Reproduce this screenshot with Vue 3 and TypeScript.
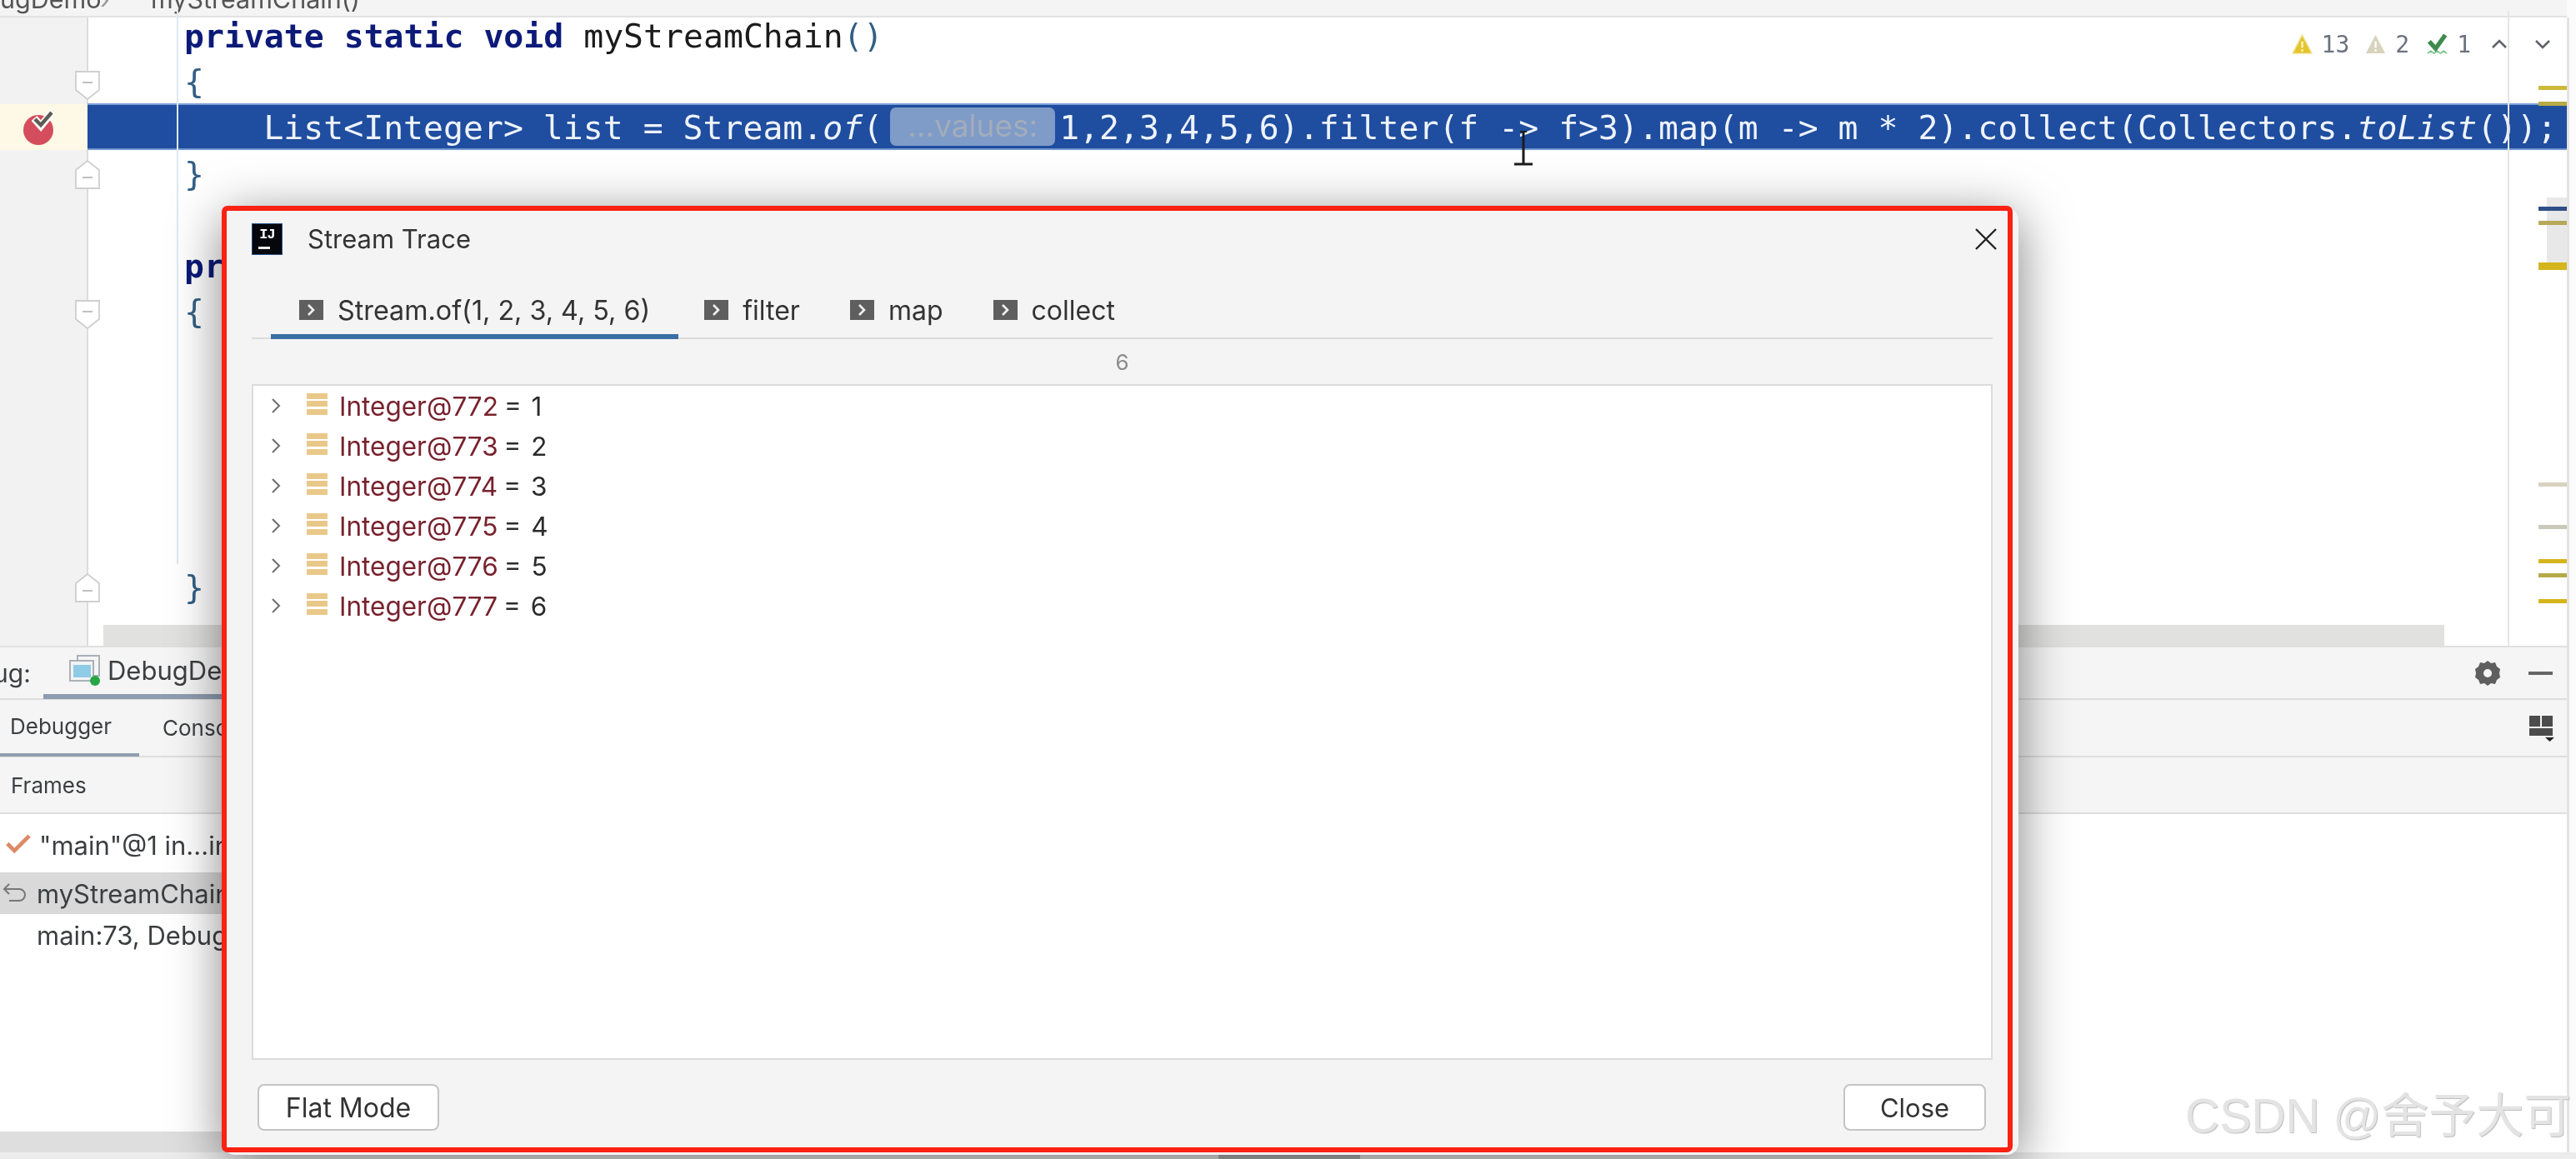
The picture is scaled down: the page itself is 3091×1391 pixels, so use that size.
<script setup lang="ts">
const ints = [
  { name: 'Integer@772', val: '1' },
  { name: 'Integer@773', val: '2' },
  { name: 'Integer@774', val: '3' },
  { name: 'Integer@775', val: '4' },
  { name: 'Integer@776', val: '5' },
  { name: 'Integer@777', val: '6' },
]
const tabs = ['Stream.of(1, 2, 3, 4, 5, 6)', 'filter', 'map', 'collect']
const stripes = [
  { y: 103, h: 5, c: '#cdb93a' },
  { y: 122, h: 5, c: '#b9aa45' },
  { y: 248, h: 5, c: '#2f4f86' },
  { y: 265, h: 5, c: '#b7a95a' },
  { y: 315, h: 9, c: '#d4b51e' },
  { y: 579, h: 5, c: '#d8d3bf' },
  { y: 630, h: 5, c: '#c9c9b9' },
  { y: 671, h: 5, c: '#d4b51e' },
  { y: 688, h: 5, c: '#b5aa4a' },
  { y: 719, h: 5, c: '#d4b51e' },
]
const folds = [
  { y: 85, up: false },
  { y: 192, up: true },
  { y: 360, up: false },
  { y: 688, up: true },
]
</script>

<template>
  <div class="page">
    <div class="crumbs">
      <span class="crumb-a">ugDemo</span>
      <span class="crumb-sep">›</span>
      <span class="crumb-b">myStreamChain()</span>
    </div>

    <div class="editor">
      <div class="gutter">
        <div class="gutter-line"></div>
        <div class="bp-band"></div>
        <svg class="bp" viewBox="0 0 44 48" width="44" height="48">
          <circle cx="20" cy="27" r="18" fill="#d44d5c" />
          <path d="M15 13l8 9L37 5" fill="none" stroke="#fff" stroke-width="9" />
          <path d="M16 14l7 7L36 6" fill="none" stroke="#5d5d55" stroke-width="4.5" />
        </svg>
        <svg
          v-for="f in folds"
          :key="f.y"
          class="fold"
          :style="{ top: f.y - 21 + 'px', transform: f.up ? 'scaleY(-1)' : 'none' }"
          viewBox="0 0 30 35"
          width="30"
          height="35"
        >
          <path d="M1 1h28v22L15 34 1 23z" fill="#fff" stroke="#cfcfcf" stroke-width="1.8" />
          <path d="M9 14h12" stroke="#c0c0c0" stroke-width="2" />
        </svg>
      </div>

      <div class="code">
        <div class="indent-line"></div>
        <div class="margin-line"></div>
        <div class="line"><b>private static void </b>myStreamChain<span class="pn">()</span></div>
        <div class="line"><span class="pn">{</span></div>
        <div class="line hl">
          <span>List&lt;Integer&gt; list = Stream.<i>of</i>(</span><span class="hint">...values:</span><span>1,2,3,4,5,6).filter(f -&gt; f&gt;3).map(m -&gt; m * 2).collect(Collectors.<i>toList</i>());</span>
        </div>
        <div class="line"><span class="pn">}</span></div>
        <div class="line"></div>
        <div class="line"><b>pr</b></div>
        <div class="line"><span class="pn">{</span></div>
        <div class="line"></div>
        <div class="line"></div>
        <div class="line"></div>
        <div class="line"></div>
        <div class="line"></div>
        <div class="line"><span class="pn">}</span></div>

        <div class="inspect">
          <svg viewBox="0 0 28 28" width="27" height="27"><path d="M14 2l12 23H2z" fill="#e3c52c" stroke="#f0e39a" stroke-width="1.5" /><path d="M14 10v8M14 20v2.5" stroke="#fff7c0" stroke-width="2.5" /></svg>
          <span class="count c1">13</span>
          <svg viewBox="0 0 28 28" width="27" height="27"><path d="M14 2l12 23H2z" fill="#d7d3bd" /><path d="M14 10v8M14 20v2.5" stroke="#fff" stroke-width="2.5" /></svg>
          <span class="count c2">2</span>
          <svg viewBox="0 0 28 30" width="27" height="29"><path d="M4 11l8 9L24 3" fill="none" stroke="#3f8a4d" stroke-width="5.5" /><path d="M2 26l4-3 4 3 4-3 4 3 4-3 4 3" fill="none" stroke="#6fbf7d" stroke-width="1.6" /></svg>
          <span class="count c3">1</span>
          <svg class="up" viewBox="0 0 20 12" width="20" height="12"><path d="M2 10l8-8 8 8" fill="none" stroke="#5f6368" stroke-width="2.6" /></svg>
          <svg class="down" viewBox="0 0 20 12" width="20" height="12"><path d="M2 2l8 8 8-8" fill="none" stroke="#5f6368" stroke-width="2.6" /></svg>
        </div>

        <div class="thumb"></div>
        <div
          v-for="s in stripes"
          :key="s.y"
          class="stripe"
          :style="{ top: s.y - 21 + 'px', height: s.h + 'px', background: s.c }"
        ></div>
        <div class="hscroll"></div>
        <svg class="ibeam" viewBox="0 0 26 42" width="26" height="42">
          <path d="M13 2v38M2 40h22" fill="none" stroke="#1c1c1c" stroke-width="3" />
          <path d="M9 1h8" stroke="#1c1c1c" stroke-width="2" />
        </svg>
      </div>
    </div>

    <div class="debug">
      <div class="bar bar-tool">
        <span class="bar-label">ug:</span>
        <div class="run-tab">
          <svg viewBox="0 0 38 38" width="38" height="38">
            <rect x="10" y="1" width="26" height="24" fill="none" stroke="#a9b1b8" stroke-width="2" />
            <rect x="1" y="7" width="28" height="24" fill="#f4f4f4" stroke="#a9b1b8" stroke-width="2" />
            <rect x="5" y="12" width="21" height="15" fill="#8ecbe6" />
            <circle cx="31" cy="31" r="6" fill="#27a644" />
          </svg>
          <span>DebugDemo</span>
        </div>
        <div class="bar-icons">
          <svg viewBox="0 0 32 32" width="32" height="32">
            <path fill="#5f5f5f" fill-rule="evenodd" d="M16 1l4 3 5-1 2 5 4 3-1 5 1 5-4 3-2 5-5-1-4 3-4-3-5 1-2-5-4-3 1-5-1-5 4-3 2-5 5 1zm0 10a5 5 0 100 10 5 5 0 000-10z" />
          </svg>
          <span class="minimize"></span>
        </div>
      </div>
      <div class="bar bar-sub">
        <div class="sub-tab active">Debugger</div>
        <div class="sub-tab">Console</div>
        <svg class="layout" viewBox="0 0 32 32" width="32" height="32">
          <rect x="1" y="1" width="13" height="13" fill="#4c4c4c" />
          <rect x="16" y="1" width="13" height="13" fill="#4c4c4c" />
          <rect x="1" y="16" width="28" height="9" fill="#4c4c4c" />
          <path d="M20 27h11l-5.500 5z" fill="#222" />
        </svg>
      </div>
      <div class="bar bar-frames"><span>Frames</span></div>
      <div class="frames">
        <div class="frame">
          <svg class="ficon" viewBox="0 0 34 26" width="32" height="25"><path d="M3 13l9 9L31 3" fill="none" stroke="#dd8a66" stroke-width="5" /></svg>
          <span>"main"@1 in...in</span>
        </div>
        <div class="frame selected">
          <svg class="ficon back" viewBox="0 0 30 26" width="30" height="26"><path d="M8 2L2 8l6 6M2 8h18a6 6 0 010 14H8" fill="none" stroke="#777" stroke-width="2" /></svg>
          <span>myStreamChain</span>
        </div>
        <div class="frame plain"><span>main:73, DebugDemo</span></div>
      </div>
      <div class="frames-scroll"></div>
    </div>
    <div class="bottom"><div class="bottom-thumb"></div></div>

    <div class="dialog">
      <div class="d-title">
        <div class="ij"><span>IJ</span><i></i></div>
        <span class="d-name">Stream Trace</span>
        <svg class="d-x" viewBox="0 0 28 26" width="28" height="26"><path d="M2 1l24 24M26 1L2 25" fill="none" stroke="#222" stroke-width="2.4" /></svg>
      </div>
      <div class="d-tabs">
        <div v-for="(t, i) in tabs" :key="t" class="d-tab" :class="{ on: i === 0 }">
          <svg viewBox="0 0 29 24" width="29" height="24">
            <rect width="29" height="24" fill="#5f5f5f" />
            <path d="M11 6l6 6-6 6" fill="none" stroke="#f0f0f0" stroke-width="2.6" />
          </svg>
          <span>{{ t }}</span>
        </div>
      </div>
      <div class="d-count">6</div>
      <div class="d-list">
        <div v-for="r in ints" :key="r.name" class="d-row">
          <svg class="chev" viewBox="0 0 13 20" width="13" height="20"><path d="M2 2l8 8-8 8" fill="none" stroke="#6e6e6e" stroke-width="2" /></svg>
          <span class="bars"><i></i><i></i><i></i></span>
          <span class="iname">{{ r.name }}</span>
          <span class="ival">= {{ r.val }}</span>
        </div>
      </div>
      <div class="d-foot">
        <button class="btn flat">Flat Mode</button>
        <button class="btn close">Close</button>
      </div>
    </div>
    <div class="redbox"></div>
    <div class="mark">CSDN @舍予大可</div>
  </div>
</template>

<style>
html, body { margin: 0; background: #fff; }
</style>

<style scoped>
.page {
  position: relative;
  width: 3091px;
  height: 1391px;
  overflow: hidden;
  background: #fbfbfb;
  display: flex;
  flex-direction: column;
  font-family: Inter, "Noto Sans", sans-serif;
  color: #333;
  filter: blur(0.7px);
}
.crumbs {
  height: 21px;
  flex: none;
  box-sizing: border-box;
  width: 3080px;
  overflow: hidden;
  background: #f4f4f4;
  border-bottom: 2px solid #e2e2e2;
  font-size: 30.5px;
  line-height: 20px;
  color: #555;
  display: flex;
  align-items: flex-start;
}
.crumbs span { margin-top: -11px; white-space: nowrap; }
.crumb-a { width: 120px; }
.crumb-sep { width: 61px; color: #999; }

.editor {
  width: 3080px;
  height: 754px;
  flex: none;
  display: flex;
  background: #fff;
  border-right: 3px solid #e3e3e3;
}
.gutter {
  position: relative;
  width: 105px;
  flex: none;
  background: #f2f2f2;
}
.gutter-line {
  position: absolute;
  left: 104px;
  top: 0;
  bottom: 0;
  width: 2px;
  background: #dcdcdc;
}
.bp-band {
  position: absolute;
  left: 0;
  right: 0;
  top: 104px;
  height: 55px;
  background: #fdf9e6;
}
.bp { position: absolute; left: 26px; top: 108px; }
.fold { position: absolute; left: 90px; }

.code {
  position: relative;
  flex: 1;
  min-width: 0;
  overflow: hidden;
  padding-top: 1px;
  margin-top: -8px;
  font-family: "DejaVu Sans Mono", monospace;
  font-size: 39.8px;
  color: #1b1b1b;
}
.line {
  height: 55.2px;
  line-height: 59px;
  padding-left: 116px;
  white-space: pre;
}
.line b { color: #0c1a78; font-weight: 700; }
.pn { color: #335f85; }
.hl {
  background: #1f4d9f;
  color: #eef3fb;
  box-sizing: border-box;
  border-top: 2px solid #7ba0d6;
  border-bottom: 2px solid #6f96cf;
  line-height: 54px;
  padding-left: 211.4px;
}
.hint {
  display: inline-block;
  box-sizing: border-box;
  width: 198px;
  height: 46px;
  margin: 3px 5px 0 9px;
  border-radius: 7px;
  background: #7f9bc8;
  color: #a2acbb;
  font-family: Inter, sans-serif;
  font-size: 37px;
  line-height: 44px;
  text-align: center;
  vertical-align: top;
}
.indent-line {
  position: absolute;
  left: 107px;
  top: 0;
  height: 664px;
  width: 2px;
  background: #dfe9f0;
  z-index: 2;
}
.margin-line {
  position: absolute;
  left: 2904px;
  top: 0;
  bottom: 0;
  width: 2px;
  background: #e6e6e6;
  z-index: 2;
}
.inspect {
  position: absolute;
  right: 19px;
  top: 25px;
  display: flex;
  align-items: center;
  height: 30px;
}
.count { font-size: 28px; color: #6b7280; }
.c1 { margin: 0 18px 0 10px; }
.c2 { margin: 0 20px 0 10px; }
.c3 { margin: 0 24px 0 10px; }
.up { margin-right: 32px; }
.thumb {
  position: absolute;
  left: 2951px;
  width: 24px;
  top: 224px;
  height: 83px;
  background: #e8e8e8;
}
.stripe {
  position: absolute;
  left: 2941px;
  width: 34px;
  margin-top: 8px;
}
.hscroll {
  position: absolute;
  left: 19px;
  width: 2809px;
  top: 737px;
  height: 25px;
  background: #e1e1e0;
}
.ibeam { position: absolute; left: 1710px; top: 144px; z-index: 3; }

.debug {
  width: 3080px;
  flex: none;
  height: 606px;
  display: flex;
  flex-direction: column;
  background: #fff;
  border-right: 3px solid #e3e3e3;
  border-top: 2px solid #e0e0e0;
  box-sizing: content-box;
  font-size: 27px;
  color: #3c3f41;
}
.bar {
  flex: none;
  display: flex;
  align-items: center;
  background: #f5f5f5;
  border-bottom: 2px solid #dedede;
  box-sizing: border-box;
}
.bar-tool { height: 63px; position: relative; }
.bar-label { width: 60px; margin-left: -8px; font-size: 30px; flex: none; }
.run-tab {
  height: 63px;
  box-sizing: border-box;
  display: flex;
  align-items: center;
  gap: 8px;
  padding-left: 31px;
  padding-right: 120px;
  border-bottom: 6px solid #8f9db0;
  font-size: 31px;
}
.bar-icons {
  margin-left: auto;
  display: flex;
  align-items: center;
  gap: 33px;
  padding-right: 17px;
}
.minimize { width: 29px; height: 4px; background: #666; }
.bar-sub { height: 69px; }
.sub-tab {
  height: 69px;
  box-sizing: border-box;
  display: flex;
  align-items: center;
  padding: 0 32px 0 12px;
  font-size: 26px;
}
.sub-tab.active { border-bottom: 4px solid #8f9db0; width: 167px; }
.sub-tab:not(.active) { margin-left: 16px; }
.layout { margin-left: auto; margin-right: 14px; }
.bar-frames { height: 68px; padding-left: 13px; font-size: 26px; }
.frames { flex: 1; padding-top: 12px; background: #fff; font-size: 31px; }
.frame {
  width: 600px;
  height: 50px;
  display: flex;
  align-items: center;
  padding-left: 47px;
  box-sizing: border-box;
  position: relative;
  white-space: nowrap;
}
.ficon { position: absolute; left: 6px; top: 11px; }
.ficon.back { left: 3px; top: 12px; }
.frame.selected { background: #d9d9d9; padding-left: 44px; margin-top: 8px; }
.frame.plain { padding-left: 44px; }
.frames-scroll { flex: none; width: 600px; height: 25px; background: #dedede; }
.bottom {
  flex: none;
  height: 8px;
  background: #ececec;
  position: relative;
  width: 3091px;
}
.bottom-thumb {
  position: absolute;
  left: 1462px;
  width: 170px;
  top: 0;
  height: 8px;
  background: #b4b4b4;
}

.dialog {
  position: absolute;
  left: 268px;
  top: 250px;
  width: 2154px;
  height: 1136px;
  box-sizing: border-box;
  border-radius: 14px;
  background: #f4f4f4;
  box-shadow: 0 10px 62px rgba(0, 0, 0, 0.5);
  z-index: 5;
  display: flex;
  flex-direction: column;
  padding: 0 31px 0 34px;
  color: #333;
}
.d-title {
  height: 75px;
  flex: none;
  display: flex;
  align-items: center;
  position: relative;
}
.ij {
  width: 37px;
  height: 38px;
  margin-top: -2px;
  box-sizing: border-box;
  background: #05070c;
  border: 1px solid #26518c;
  color: #fff;
  font-family: "Liberation Mono", monospace;
  font-weight: 700;
  font-size: 17px;
  line-height: 24px;
  text-align: center;
  position: relative;
}
.ij span { display: block; letter-spacing: -1px; margin-top: 1px; }
.ij i {
  position: absolute;
  left: 7px;
  top: 27px;
  width: 14px;
  height: 3px;
  background: #eee;
}
.d-name { margin-left: 30px; font-size: 31px; margin-top: -3px; }
.d-x { position: absolute; right: -6px; top: 24px; }
.d-tabs {
  flex: none;
  height: 82px;
  box-sizing: border-box;
  display: flex;
  padding-left: 23px;
  border-bottom: 2px solid #dcdcdc;
}
.d-tab {
  height: 82px;
  box-sizing: border-box;
  display: flex;
  align-items: center;
  gap: 17px;
  padding: 12px 30px 0;
  font-size: 32px;
}
.d-tab.on {
  border-bottom: 6px solid #3a6ea5;
  padding: 18px 34px 0;
  font-size: 32.3px;
  margin-right: 1px;
}
.d-count {
  flex: none;
  height: 54px;
  line-height: 56px;
  text-align: center;
  color: #8c8c8c;
  font-size: 26px;
}
.d-list {
  flex: none;
  height: 811px;
  box-sizing: border-box;
  background: #fff;
  border: 2px solid #dcdcdc;
}
.d-row {
  height: 48px;
  display: flex;
  align-items: center;
  font-size: 31.5px;
}
.chev { margin-left: 21px; flex: none; }
.bars {
  margin-left: 30px;
  margin-top: -5px;
  width: 25px;
  height: 26px;
  display: flex;
  flex-direction: column;
  justify-content: space-between;
  flex: none;
}
.bars i { height: 7px; background: #e9c98a; display: block; }
.iname { margin-left: 14px; color: #78222e; }
.ival { margin-left: 7px; color: #2b2b2b; white-space: pre; word-spacing: 3px; }
.d-foot {
  flex: none;
  display: flex;
  justify-content: space-between;
  padding: 29px 8px 0 7px;
}
.btn {
  height: 56px;
  box-sizing: border-box;
  border: 2px solid #c4c4c4;
  border-radius: 8px;
  background: #fff;
  font-family: inherit;
  font-size: 32px;
  color: #333;
}
.flat { width: 218px; }
.close { width: 171px; font-size: 31px; }

.redbox {
  position: absolute;
  left: 266px;
  top: 247px;
  width: 2149px;
  height: 1136px;
  box-sizing: border-box;
  border: 6px solid #fb2113;
  border-radius: 7px;
  z-index: 6;
  pointer-events: none;
}
.mark {
  position: absolute;
  left: 2622px;
  top: 1303px;
  z-index: 7;
  white-space: nowrap;
  font-family: "Liberation Sans", "Noto Sans CJK SC", sans-serif;
  font-size: 57px;
  line-height: 72px;
  color: #e4e4e4;
  text-shadow: 1px 1px 1px #bcbcbc;
}
</style>
